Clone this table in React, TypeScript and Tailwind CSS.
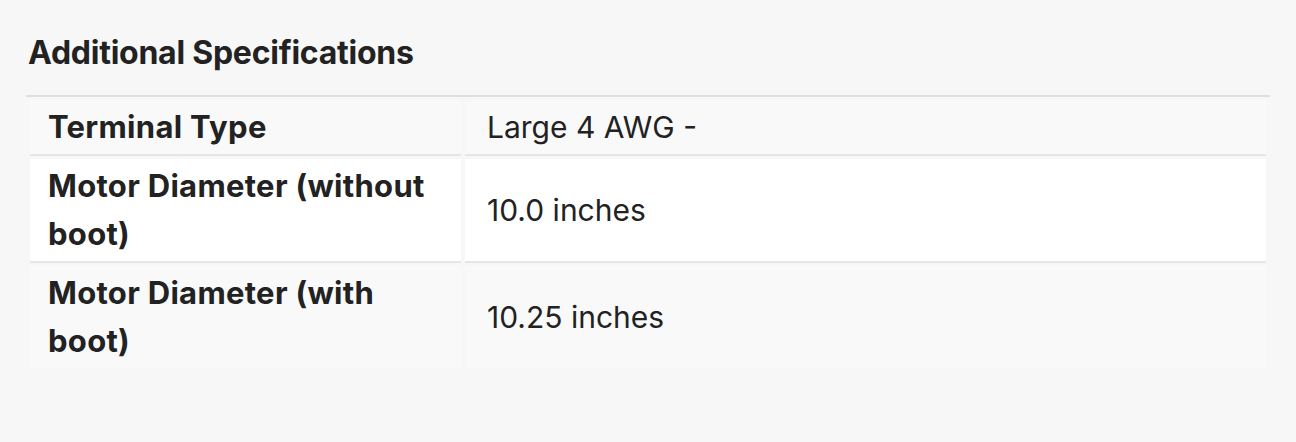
import React from "react";

const rows = [
  { label: "Terminal Type", value: "Large 4 AWG -" },
  { label: "Motor Diameter (without boot)", value: "10.0 inches" },
  { label: "Motor Diameter (with boot)", value: "10.25 inches" },
];

export default function App() {
  return (
    <div
      className="w-[1296px] h-[442px] bg-[#f7f7f7] px-[26px] pt-[31px] text-[#222222]"
      style={{ fontFamily: "Inter, 'Noto Sans', sans-serif" }}
    >
      <h2 className="text-[32px] font-bold leading-[44px] pl-[2px] mb-[20px] tracking-[-0.25px]">
        Additional Specifications
      </h2>
      <table className="w-full border-separate border-spacing-x-[4px] border-spacing-y-[3px] border-t-2 border-[#dedede] table-fixed">
        <colgroup>
          <col className="w-[431px]" />
          <col />
        </colgroup>
        <tbody>
          {rows.map((r, i) => {
            const bg = i % 2 === 1 ? "bg-white" : "bg-[#f9f9f9]";
            const border = i < rows.length - 1 ? "border-b-2 border-[#e6e6e6]" : "";
            return (
              <tr key={i}>
                <td className={`${bg} ${border} align-middle pl-[18px] pr-[20px] py-[3px] text-[31px] font-bold leading-[48px] tracking-[0.3px]`}>
                  {r.label}
                </td>
                <td className={`${bg} ${border} align-middle pl-[22px] pr-[20px] py-[3px] text-[30px] leading-[48px]`}>
                  {r.value}
                </td>
              </tr>
            );
          })}
        </tbody>
      </table>
    </div>
  );
}
